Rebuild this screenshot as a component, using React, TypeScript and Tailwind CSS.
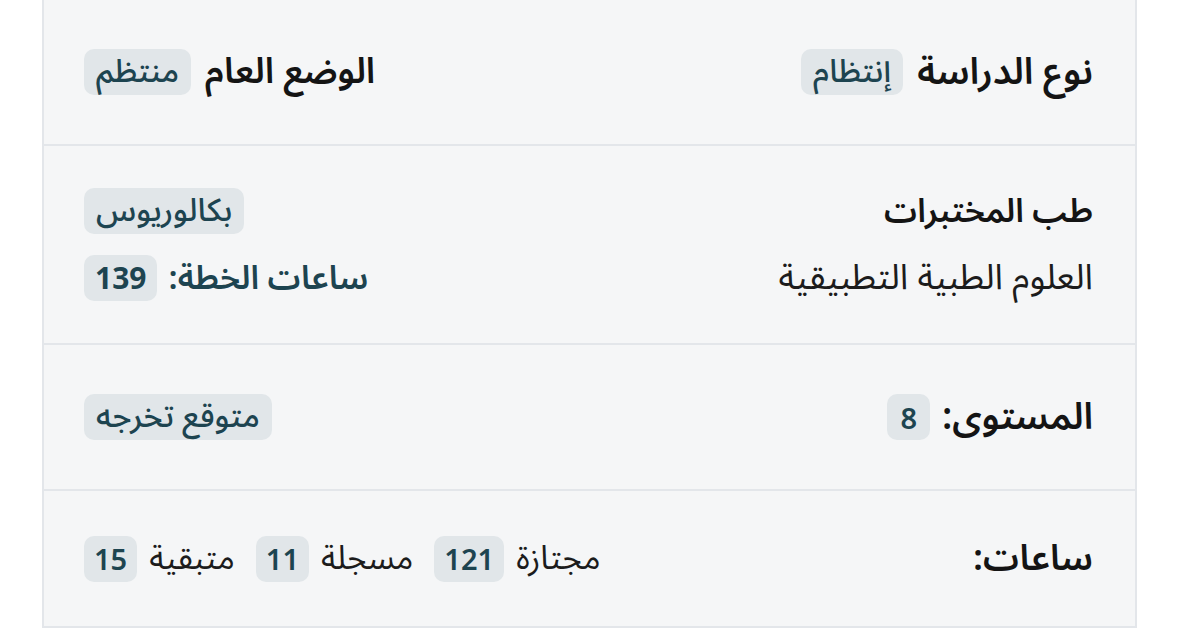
import type { ReactNode } from "react";

const FONT = "font-['Noto_Sans_Arabic','Noto_Sans','DejaVu_Sans',sans-serif]";

function Badge({ children, num = false }: { children: ReactNode; num?: boolean }) {
    return (
        <span
            className={`inline-flex h-[46px] items-center rounded-[10px] bg-[#e1e6e9] leading-none text-[#1d4450] ${
                num
                    ? "px-[10px] font-['Noto_Sans',sans-serif] text-[29px] font-semibold"
                    : "px-3 text-[32px] font-medium"
            }`}
        >
            {children}
        </span>
    );
}

export default function App() {
    return (
        <div dir="rtl" className={`min-h-[630px] w-[1179px] bg-white ${FONT}`}>
            <div className="mr-[42px] w-[1095px] border-x-2 border-[#e3e6ea] bg-[#f5f6f7]">
                {/* study type / status */}
                <div className="flex h-[146px] items-center justify-between border-b-2 border-[#e3e6ea] pr-[42px] pl-[40px]">
                    <div className="flex items-center gap-[14px]">
                        <span className="text-[37px] leading-none font-semibold text-[#141414]">نوع الدراسة</span>
                        <Badge>إنتظام</Badge>
                    </div>
                    <div className="flex items-center gap-[14px]">
                        <span className="text-[36px] leading-none font-semibold text-[#141414]">الوضع العام</span>
                        <Badge>منتظم</Badge>
                    </div>
                </div>

                {/* major */}
                <div className="flex h-[199px] items-center justify-between border-b-2 border-[#e3e6ea] pr-[42px] pl-[40px]">
                    <div className="flex flex-col gap-[21px]">
                        <div className="flex h-[46px] items-center text-[33px] leading-none font-semibold text-[#141414]">
                            طب المختبرات
                        </div>
                        <div className="flex h-[46px] items-center text-[35.5px] leading-none text-[#1c1c1c]">
                            العلوم الطبية التطبيقية
                        </div>
                    </div>
                    <div className="flex flex-col items-end gap-[21px]">
                        <Badge>بكالوريوس</Badge>
                        <div className="flex items-center gap-[11px]">
                            <span className="text-[33px] leading-none font-semibold text-[#1d4450]">ساعات الخطة:</span>
                            <span className="inline-flex h-[46px] items-center rounded-[10px] bg-[#e1e6e9] px-[11px] font-['Noto_Sans',sans-serif] text-[30px] leading-none font-bold text-[#1d4450]">
                                139
                            </span>
                        </div>
                    </div>
                </div>

                {/* level */}
                <div className="flex h-[146px] items-center justify-between border-b-2 border-[#e3e6ea] pr-[42px] pl-[40px]">
                    <div className="flex items-center gap-[12px]">
                        <span className="text-[37px] leading-none font-semibold text-[#141414]">المستوى:</span>
                        <span className="inline-flex h-[46px] items-center rounded-[10px] bg-[#e1e6e9] px-[13px] font-['Noto_Sans',sans-serif] text-[29px] leading-none font-semibold text-[#1d4450]">
                            8
                        </span>
                    </div>
                    <Badge>متوقع تخرجه</Badge>
                </div>

                {/* hours */}
                <div className="flex h-[137px] items-center justify-between border-b-2 border-[#e3e6ea] pr-[42px] pl-[40px]">
                    <span className="text-[36px] leading-none font-semibold text-[#141414]">ساعات:</span>
                    <div className="flex items-center gap-[21px] text-[33px] leading-none text-[#1c1c1c]">
                        <div className="flex items-center gap-[12px]">
                            <span>مجتازة</span>
                            <Badge num>121</Badge>
                        </div>
                        <div className="flex items-center gap-[12px]">
                            <span>مسجلة</span>
                            <Badge num>11</Badge>
                        </div>
                        <div className="flex items-center gap-[12px]">
                            <span>متبقية</span>
                            <Badge num>15</Badge>
                        </div>
                    </div>
                </div>
            </div>
        </div>
    );
}
